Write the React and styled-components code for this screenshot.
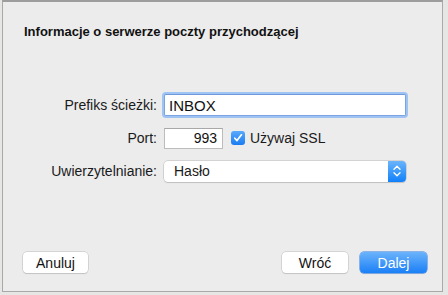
import React from "react";
import styled, { createGlobalStyle } from "styled-components";

const Global = createGlobalStyle`
  html, body { margin: 0; padding: 0; }
  body {
    background: #e6e7e4;
    font-family: "Liberation Sans", Arial, sans-serif;
    font-size: 13.5px;
    color: #1a1a1a;
    width: 448px;
    height: 295px;
    overflow: hidden;
  }
`;

const Page = styled.div`
  width: 448px;
  height: 295px;
  padding-left: 2px;
  box-sizing: border-box;
`;

const Panel = styled.div`
  width: 441px;
  height: 292px;
  box-sizing: border-box;
  background: #ececec;
  border: 1px solid #a9a9a9;
  border-top: 2px solid #9d9d9d;
  display: flex;
  flex-direction: column;
`;

const Title = styled.h1`
  margin: 22px 0 0 21px;
  font-size: 13px;
  line-height: 16px;
  font-weight: bold;
  color: #111;
`;

const Form = styled.div`
  margin-top: 54px;
  display: grid;
  grid-template-columns: 154px 242px;
  column-gap: 7px;
  row-gap: 11px;
  align-items: center;
`;

const Label = styled.label`
  text-align: right;
  line-height: 22px;
  font-size: 14px;
  color: #1a1a1a;
`;

const TextField = styled.div`
  height: ${(p) => p.$h || 22}px;
  width: ${(p) => (p.$w ? `${p.$w}px` : "auto")};
  box-sizing: border-box;
  background: #fff;
  border: 1px solid ${(p) => (p.$focus ? "#7aa3e0" : "#bcbcbc")};
  border-top-color: ${(p) => (p.$focus ? "#6e9ad9" : "#a8a8a8")};
  box-shadow: ${(p) => (p.$focus ? "0 0 0 2px #9fc3f3" : "none")};
  border-radius: ${(p) => (p.$focus ? "2px" : "0")};
  display: flex;
  align-items: center;
  justify-content: ${(p) => (p.$right ? "flex-end" : "flex-start")};
  padding: 0 ${(p) => (p.$right ? 5 : 4)}px;
  font-size: ${(p) => p.$fs || 14}px;
  color: #111;
`;

const PortRow = styled.div`
  display: flex;
  align-items: center;
  gap: 7px;
`;

const Check = styled.span`
  width: 14px;
  height: 14px;
  border-radius: 3px;
  background: linear-gradient(#5aa9fb, #1a7cf2);
  display: inline-flex;
  align-items: center;
  justify-content: center;
  margin-left: 1px;
`;

const CheckLabel = styled.span`
  margin-left: -2px;
  font-size: 14px;
`;

const Popup = styled.div`
  height: 21px;
  box-sizing: border-box;
  background: #fff;
  border-radius: 4px;
  box-shadow: 0 0 0 0.5px #b8b8b8, 0 1px 1px rgba(0, 0, 0, 0.15);
  display: flex;
  align-items: stretch;
  overflow: hidden;
`;

const PopupText = styled.span`
  flex: 1;
  display: flex;
  align-items: center;
  padding-left: 10px;
  font-size: 14px;
`;

const Stepper = styled.span`
  width: 18px;
  background: linear-gradient(#6ab4fb, #1181fa);
  display: flex;
  align-items: center;
  justify-content: center;
`;

const Footer = styled.div`
  margin-top: auto;
  margin-bottom: 18px;
  display: flex;
  align-items: center;
  padding: 0 15px 0 20px;
`;

const Spacer = styled.div`
  flex: 1;
`;

const Button = styled.button`
  width: ${(p) => p.$w}px;
  height: 21px;
  margin-left: ${(p) => p.$ml || 0}px;
  border-radius: 4px;
  font-family: "Liberation Sans", Arial, sans-serif;
  font-size: 14px;
  padding: 0;
  border: none;
  color: ${(p) => (p.$primary ? "#fff" : "#111")};
  background: ${(p) =>
    p.$primary ? "linear-gradient(#6cb3fb, #1a80f6)" : "#fff"};
  box-shadow: ${(p) =>
    p.$primary
      ? "0 0 0 0.5px #2b7de8, 0 1px 1px rgba(0,0,0,0.12)"
      : "0 0 0 0.5px #bdbdbd, 0 1px 1px rgba(0,0,0,0.15)"};
`;

export default function App() {
  return (
    <>
      <Global />
      <Page>
        <Panel>
          <Title>Informacje o serwerze poczty przychodzącej</Title>
          <Form>
            <Label>Prefiks ścieżki:</Label>
            <TextField $focus $fs={15}>INBOX</TextField>

            <Label>Port:</Label>
            <PortRow>
              <TextField $w={59} $h={21} $right>993</TextField>
              <Check>
                <svg width="10" height="10" viewBox="0 0 10 10">
                  <path d="M1.8 5.2 L4 7.6 L8.4 1.8" fill="none" stroke="#fff" strokeWidth="1.7" strokeLinecap="round" strokeLinejoin="round" />
                </svg>
              </Check>
              <CheckLabel>Używaj SSL</CheckLabel>
            </PortRow>

            <Label>Uwierzytelnianie:</Label>
            <Popup>
              <PopupText>Hasło</PopupText>
              <Stepper>
                <svg width="10" height="14" viewBox="0 0 10 14">
                  <path d="M2 5.2 L5 2.2 L8 5.2 M2 8.8 L5 11.8 L8 8.8" fill="none" stroke="#fff" strokeWidth="1.4" strokeLinecap="round" strokeLinejoin="round" />
                </svg>
              </Stepper>
            </Popup>
          </Form>
          <Footer>
            <Button $w={65}>Anuluj</Button>
            <Spacer />
            <Button $w={66}>Wróć</Button>
            <Button $w={67} $ml={12} $primary>Dalej</Button>
          </Footer>
        </Panel>
      </Page>
    </>
  );
}
